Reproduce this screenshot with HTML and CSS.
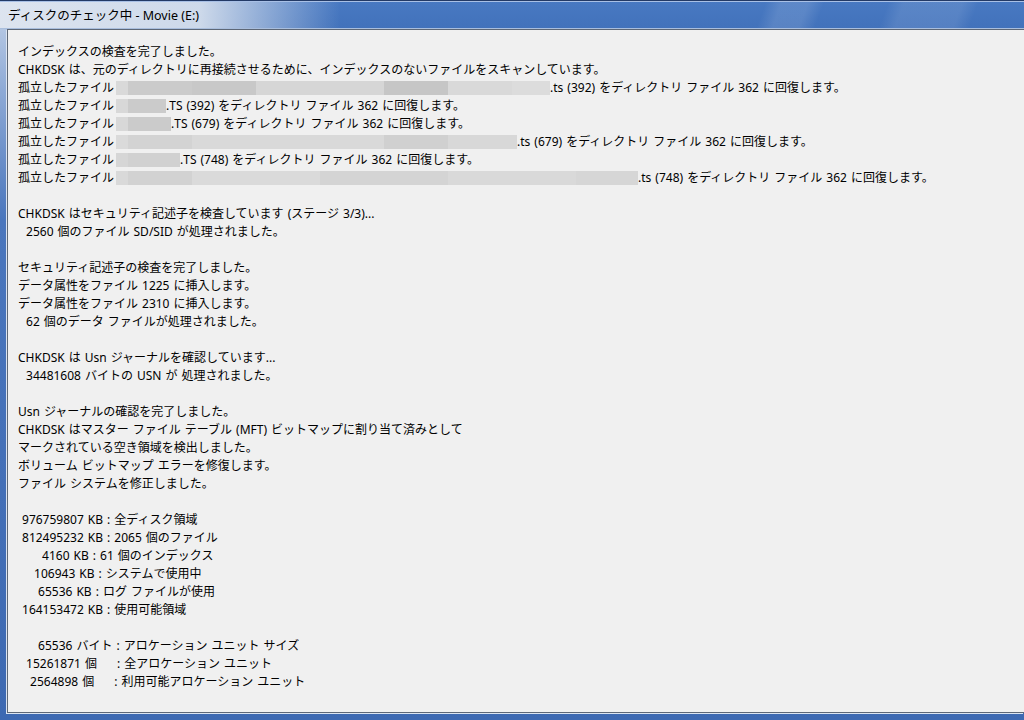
FILE: index.html
```html
<!DOCTYPE html>
<html lang="ja">
<head>
    <meta charset="UTF-8">
    <title>ディスクのチェック中 - Movie (E:)</title>
    <link rel="stylesheet" href="styles.css">
</head>
<body>
    <div class="window">
        <div class="titlebar">
            <span class="title">ディスクのチェック中 - Movie (E:)</span>
        </div>

        <div class="frame">
            <div class="panel">
                <!-- index stage -->
                <div class="block">
                    <div class="line">インデックスの検査を完了しました。</div>
                    <div class="line">CHKDSK は、元のディレクトリに再接続させるために、インデックスのないファイルをスキャンしています。</div>
                    <div class="line">孤立したファイル<span class="mask m1" style="width: 434px"></span>.ts (392) をディレクトリ ファイル 362 に回復します。</div>
                    <div class="line">孤立したファイル<span class="mask m2" style="width: 50px"></span>.TS (392) をディレクトリ ファイル 362 に回復します。</div>
                    <div class="line">孤立したファイル<span class="mask m2" style="width: 55px"></span>.TS (679) をディレクトリ ファイル 362 に回復します。</div>
                    <div class="line">孤立したファイル<span class="mask m3" style="width: 401px"></span>.ts (679) をディレクトリ ファイル 362 に回復します。</div>
                    <div class="line">孤立したファイル<span class="mask m4" style="width: 64px"></span>.TS (748) をディレクトリ ファイル 362 に回復します。</div>
                    <div class="line">孤立したファイル<span class="mask m5" style="width: 522px"></span>.ts (748) をディレクトリ ファイル 362 に回復します。</div>
                </div>

                <!-- security descriptors -->
                <div class="block">
                    <div class="line">CHKDSK はセキュリティ記述子を検査しています (ステージ 3/3)...</div>
                    <div class="line">  2560 個のファイル SD/SID が処理されました。</div>
                </div>

                <div class="block">
                    <div class="line">セキュリティ記述子の検査を完了しました。</div>
                    <div class="line">データ属性をファイル 1225 に挿入します。</div>
                    <div class="line">データ属性をファイル 2310 に挿入します。</div>
                    <div class="line">  62 個のデータ ファイルが処理されました。</div>
                </div>

                <!-- usn journal -->
                <div class="block">
                    <div class="line">CHKDSK は Usn ジャーナルを確認しています...</div>
                    <div class="line">  34481608 バイトの USN が 処理されました。</div>
                </div>

                <div class="block">
                    <div class="line">Usn ジャーナルの確認を完了しました。</div>
                    <div class="line">CHKDSK はマスター ファイル テーブル (MFT) ビットマップに割り当て済みとして</div>
                    <div class="line">マークされている空き領域を検出しました。</div>
                    <div class="line">ボリューム ビットマップ エラーを修復します。</div>
                    <div class="line">ファイル システムを修正しました。</div>
                </div>

                <!-- summary -->
                <div class="block">
                    <div class="line"> 976759807 KB : 全ディスク領域</div>
                    <div class="line"> 812495232 KB : 2065 個のファイル</div>
                    <div class="line">      4160 KB : 61 個のインデックス</div>
                    <div class="line">    106943 KB : システムで使用中</div>
                    <div class="line">     65536 KB : ログ ファイルが使用</div>
                    <div class="line"> 164153472 KB : 使用可能領域</div>
                </div>

                <div class="block">
                    <div class="line">     65536 バイト : アロケーション ユニット サイズ</div>
                    <div class="line">  15261871 個     : 全アロケーション ユニット</div>
                    <div class="line">   2564898 個     : 利用可能アロケーション ユニット</div>
                </div>
            </div>
        </div>
    </div>
</body>
</html>
```

FILE: styles.css
```css
body {
    margin: 0;
    font-family: "Noto Sans", "Noto Sans CJK JP", sans-serif;
    font-size: 12px;
    color: #000;
    background: #3d69b2;
}

.window {
    width: 1024px;
    height: 720px;
    overflow: hidden;
    display: flex;
    flex-direction: column;
    background: linear-gradient(to bottom, #c3d2e8 0, #8eaad6 90px, #4a76bd 220px, #3d69b2 100%);
}

.titlebar {
    height: 27px;
    padding-left: 8px;
    display: flex;
    align-items: center;
    border-top: 1px solid #233a66;
    border-bottom: 1px solid #a9bedd;
    box-shadow: inset 0 1px 0 #a8c0e6;
    background:
        linear-gradient(to right, rgba(226, 232, 241, 0.97) 0, rgba(220, 228, 239, 0.9) 200px, rgba(220, 228, 239, 0) 340px),
        linear-gradient(110deg, transparent 0 720px, rgba(255, 255, 255, 0.12) 735px 760px, transparent 775px 835px, rgba(255, 255, 255, 0.1) 850px 905px, transparent 920px),
        linear-gradient(to bottom, #4879c2, #4272bb);
}

.title {
    font-size: 12.5px;
    line-height: 18px;
    padding-top: 2px;
    white-space: pre;
}

.frame {
    flex: 1;
    display: flex;
    padding: 0 0 7px 7px;
}

.panel {
    flex: 1;
    padding: 13px 0 0 10px;
    background: #f0f0f0;
    border-top: 1px solid #5d6776;
    border-left: 1px solid #5d6776;
    border-bottom: 1px solid #5d6776;
    box-shadow: -1px 1px 0 #dbe4f1;
}

.block {
    margin-bottom: 18px;
}

.line {
    height: 18px;
    line-height: 18px;
    white-space: pre;
    word-spacing: 0.9px;
}

/* pixelated file names */
.mask {
    display: inline-block;
    height: 14px;
    margin-left: 2px;
    vertical-align: -3px;
    background-attachment: fixed;
}

.m1 {
    background-image: linear-gradient(to right, #d9d9d9 0 128px, #cbcbcb 128px 192px, #c8c8c8 192px 256px, #d6d6d6 256px 384px, #c6c6c6 384px 448px, #d9d9d9 448px 512px, #dcdcdc 512px);
}

.m2 {
    background-image: linear-gradient(to right, #d8d8d8 0 128px, #cbcbcb 128px);
}

.m3 {
    background-image: linear-gradient(to right, #dadada 0 128px, #d3d3d3 128px 192px, #d9d9d9 192px 384px, #d0d0d0 384px 448px, #d8d8d8 448px);
}

.m4 {
    background-image: linear-gradient(to right, #d6d6d6 0 128px, #d1d1d1 128px);
}

.m5 {
    background-image: linear-gradient(to right, #d9d9d9 0 128px, #d2d2d2 128px 192px, #dadada 192px 320px, #d4d4d4 320px 448px, #d9d9d9 448px 576px, #d6d6d6 576px);
}
```
